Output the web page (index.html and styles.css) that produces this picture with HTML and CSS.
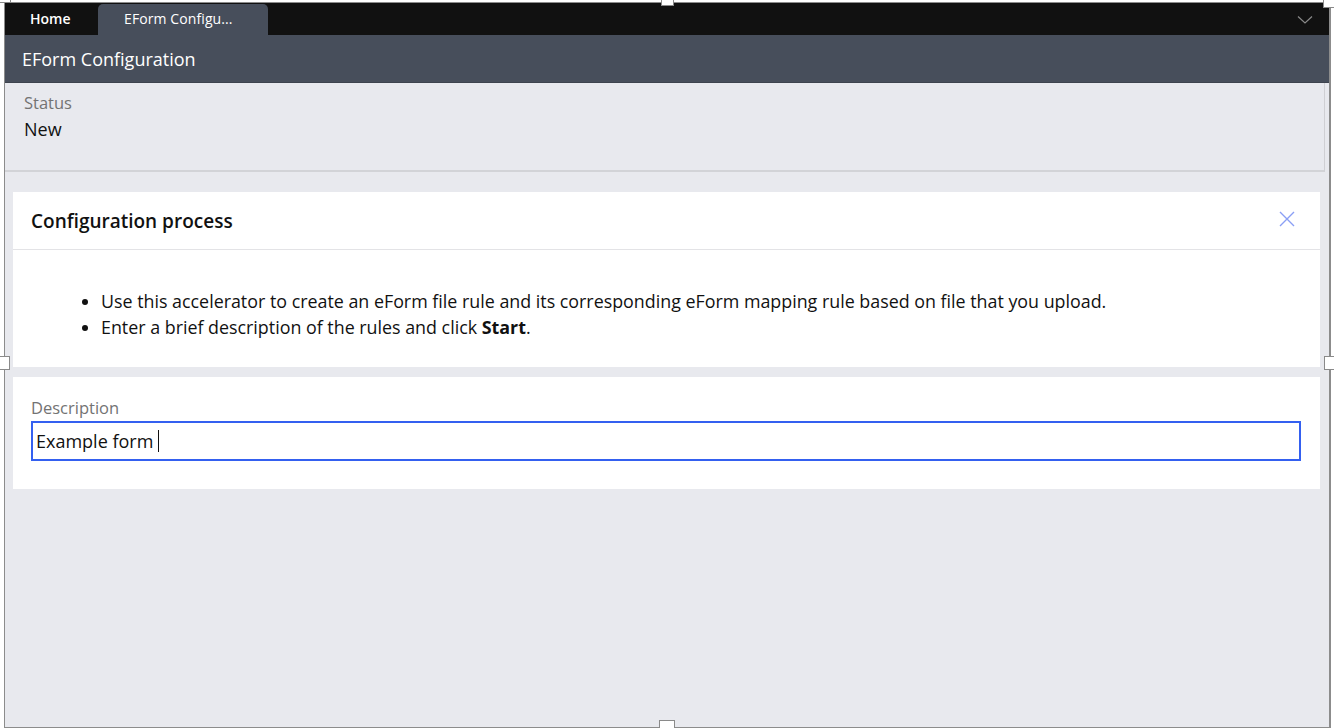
FILE: index.html
```html
<!DOCTYPE html>
<html>
<head>
<meta charset="utf-8">
<link rel="stylesheet" href="styles.css">
</head>
<body>
<div class="frame">
  <div class="tabbar">
    <div class="tab">Home</div>
    <div class="tab active">EForm Configu...</div>
    <div class="spacer"></div>
    <svg class="chev" width="16" height="10" viewBox="0 0 16 10"><path d="M1 1.5 L8 8 L15 1.5" fill="none" stroke="#8a8a8a" stroke-width="1.2"/></svg>
  </div>
  <div class="header">EForm Configuration</div>
  <div class="content">
    <div class="status">
      <div class="label">Status</div>
      <div class="value">New</div>
    </div>
    <div class="card">
      <div class="card-head">
        <span class="card-title">Configuration process</span>
        <svg class="close" width="16" height="16" viewBox="0 0 16 16"><path d="M1 1 L15 15 M15 1 L1 15" stroke="#8a9ff5" stroke-width="1.4" fill="none"/></svg>
      </div>
      <ul class="bullets">
        <li>Use this accelerator to create an eForm file rule and its corresponding eForm mapping rule based on file that you upload.</li>
        <li>Enter a brief description of the rules and click <b>Start</b>.</li>
      </ul>
    </div>
    <div class="card form">
      <div class="label">Description</div>
      <div class="input">Example form <span class="caret"></span></div>
    </div>
  </div>
</div>
<div class="handle h-top"></div>
<div class="handle h-bottom"></div>
<div class="handle h-left"></div>
<div class="handle h-right"></div>
<div class="handle h-tl"></div>
<div class="handle h-tr"></div>
</body>
</html>
```

FILE: styles.css
```css
html, body {
  margin: 0;
  padding: 0;
  background: #ffffff;
  width: 1334px;
  height: 728px;
  overflow: hidden;
  font-family: "Open Sans", "Noto Sans", sans-serif;
}
.frame {
  position: relative;
  margin: 2px 3px 0 4px;
  height: 724px;
  border: 1px solid #8c8c8c;
  border-right-width: 2px;
  background: #e8e9ee;
  display: flex;
  flex-direction: column;
}
.tabbar {
  height: 32px;
  background: #111111;
  display: flex;
  align-items: flex-end;
  flex-shrink: 0;
}
.tab {
  color: #ffffff;
  font-size: 14px;
  font-weight: 600;
  height: 31px;
  line-height: 30px;
  padding: 0 0 0 25px;
  width: 68px;
}
.tab.active {
  background: #474e5b;
  border-radius: 5px 5px 0 0;
  width: 144px;
  padding-left: 26px;
  font-weight: 400;
  letter-spacing: 0.1px;
}
.spacer { flex: 1; }
.chev {
  align-self: center;
  margin-right: 16px;
  margin-top: 2px;
}
.header {
  height: 47px;
  background: #474e5b;
  color: #ffffff;
  font-size: 18px;
  line-height: 48px;
  padding-left: 17px;
  flex-shrink: 0;
  border-bottom: 1px solid #3d434e;
}
.content {
  flex: 1;
  display: flex;
  flex-direction: column;
}
.status {
  margin-right: 4px;
  border-right: 1px solid #cfcfd3;
  border-bottom: 2px solid #d2d3d7;
  padding: 9px 0 0 19px;
  box-sizing: border-box;
  height: 89px;
}
.status .label {
  color: #737373;
  font-size: 16.5px;
  line-height: 22px;
}
.status .value {
  color: #111111;
  font-size: 18px;
  line-height: 30px;
}
.card {
  background: #ffffff;
  margin: 20px 9px 0 8px;
}
.card-head {
  height: 57px;
  border-bottom: 1px solid #e3e3e6;
  display: flex;
  align-items: center;
  justify-content: space-between;
  padding: 0 25px 0 18px;
}
.card-title {
  font-size: 19px;
  font-weight: 600;
  color: #111111;
  margin-top: 1px;
}
.close { margin-top: -3px; }
.bullets {
  margin: 0;
  padding: 38px 0 27px 88px;
  font-size: 17.85px;
  line-height: 26px;
  color: #111111;
}
.bullets b { font-weight: 700; }
.card.form {
  margin-top: 10px;
  padding: 20px 19px 28px 18px;
}
.form .label {
  color: #737373;
  font-size: 16.5px;
  line-height: 22px;
}
.input {
  margin-top: 2px;
  height: 40px;
  box-sizing: border-box;
  border: 2px solid #3460f0;
  font-size: 18px;
  line-height: 36px;
  padding-left: 3px;
  color: #111111;
  display: flex;
  align-items: center;
}
.caret {
  display: inline-block;
  width: 1px;
  height: 22px;
  background: #111111;
  margin-left: 5px;
}
.handle {
  position: absolute;
  width: 9px;
  height: 9px;
  background: #ffffff;
  border: 1px solid #8a8a8a;
  box-sizing: border-box;
}
.h-top { left: 661px; top: -3px; width: 13px; }
.h-bottom { left: 659px; top: 720px; width: 16px; }
.h-left { left: -3px; top: 356px; width: 13px; height: 14px; }
.h-right { left: 1324px; top: 356px; width: 13px; height: 14px; }
.h-tl { left: -3px; top: -3px; width: 14px; height: 6px; border-color: #ffffff #8a8a8a #8a8a8a #ffffff; }
.h-tr { left: 1323px; top: -3px; width: 14px; height: 11px; border-color: #ffffff #ffffff #8a8a8a #8a8a8a; }
```
